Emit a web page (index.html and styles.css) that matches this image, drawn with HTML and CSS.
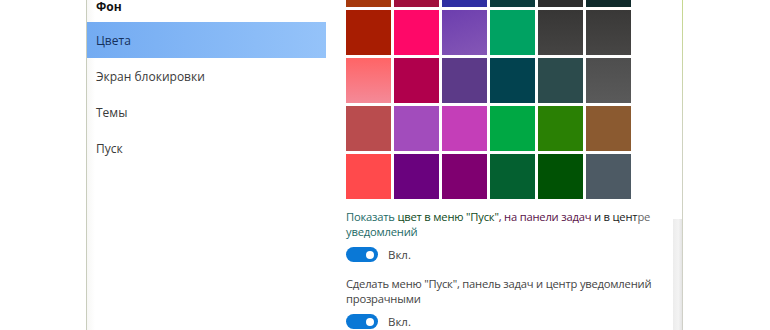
FILE: index.html
```html
<!DOCTYPE html>
<html lang="ru">
<head>
    <meta charset="UTF-8">
    <title>Персонализация - Цвета</title>
    <link rel="stylesheet" href="styles.css">
</head>
<body>
    <div class="window">
        <div class="gutter"></div>

        <nav class="side-nav">
            <div class="nav-item nav-head">Фон</div>
            <div class="nav-item active">Цвета</div>
            <div class="nav-item">Экран блокировки</div>
            <div class="nav-item">Темы</div>
            <div class="nav-item">Пуск</div>
        </nav>

        <main class="content">
            <div class="swatches">
                <div class="swatch"></div><div class="swatch"></div><div class="swatch"></div>
                <div class="swatch"></div><div class="swatch"></div><div class="swatch"></div>
                <div class="swatch"></div><div class="swatch"></div><div class="swatch"></div>
                <div class="swatch"></div><div class="swatch"></div><div class="swatch"></div>
                <div class="swatch"></div><div class="swatch"></div><div class="swatch"></div>
                <div class="swatch"></div><div class="swatch"></div><div class="swatch"></div>
                <div class="swatch"></div><div class="swatch"></div><div class="swatch"></div>
                <div class="swatch"></div><div class="swatch"></div><div class="swatch"></div>
                <div class="swatch"></div><div class="swatch"></div><div class="swatch"></div>
                <div class="swatch"></div><div class="swatch"></div><div class="swatch"></div>
            </div>

            <p class="option-text">
                <span class="t-teal">Показать</span>
                <span class="t-green">цвет в меню "Пуск"</span><span class="t-purple">, на панели задач</span>
                <span class="t-dark">и в цент</span><span class="t-grey">ре</span>
                <span class="t-teal">уведомлений</span>
            </p>
            <div class="toggle-row">
                <span class="toggle"><span class="knob"></span></span>
                <span class="toggle-label">Вкл.</span>
            </div>

            <p class="option-text second">Сделать меню "Пуск", панель задач и центр уведомлений прозрачными</p>
            <div class="toggle-row">
                <span class="toggle"><span class="knob"></span></span>
                <span class="toggle-label">Вкл.</span>
            </div>
        </main>

        <div class="scrollbar">
            <div class="thumb"></div>
        </div>
        <div class="edge"></div>
        <div class="blank"></div>
    </div>
</body>
</html>
```

FILE: styles.css
```css
* {
    margin: 0;
    padding: 0;
    box-sizing: border-box;
    font-family: 'Open Sans', 'Noto Sans', sans-serif;
}

body {
    background: white;
    color: #333;
    overflow: hidden;
}

.window {
    display: flex;
    height: 330px;
    overflow: hidden;
}

.gutter {
    width: 86px;
    flex-shrink: 0;
}

/* Left navigation */
.side-nav {
    width: 240px;
    flex-shrink: 0;
    border-left: 1px solid #c9cdbd;
    background: linear-gradient(90deg, #f7f7f5, #fff 8px);
}

.nav-item {
    height: 36px;
    display: flex;
    align-items: center;
    padding-left: 9px;
    font-size: 12px;
    color: #3a3a3a;
}

.nav-head {
    font-weight: 700;
    color: #111;
    height: 22px;
    align-items: flex-start;
    line-height: 13px;
}

.nav-item.active {
    background: linear-gradient(90deg, #73abf2, #95c3f9);
    color: #15305c;
}

/* Colour grid */
.content {
    width: 347px;
    flex-shrink: 0;
    padding-left: 20px;
    overflow: hidden;
}

.swatches {
    display: grid;
    grid-template-columns: repeat(6, 45px);
    grid-auto-rows: 45px;
    gap: 3px;
    margin-top: -38px;
}

.swatch:nth-child(1)  { background: #a6390c; }
.swatch:nth-child(2)  { background: #a0103c; }
.swatch:nth-child(3)  { background: #2f2fa2; }
.swatch:nth-child(4)  { background: #0b3b3c; }
.swatch:nth-child(5)  { background: #2e2e2e; }
.swatch:nth-child(6)  { background: #0f2a2b; }

.swatch:nth-child(7)  { background: #a81d02; }
.swatch:nth-child(8)  { background: #fe0868; }
.swatch:nth-child(9)  { background: linear-gradient(160deg, #6c3eae, #8557b6); }
.swatch:nth-child(10) { background: #00a262; }
.swatch:nth-child(11) { background: linear-gradient(180deg, #373635, #454443); }
.swatch:nth-child(12) { background: linear-gradient(180deg, #393837, #474645); }

.swatch:nth-child(13) { background: linear-gradient(180deg, #ff6466, #f48a98); }
.swatch:nth-child(14) { background: #b0004c; }
.swatch:nth-child(15) { background: #5c3a88; }
.swatch:nth-child(16) { background: #02424f; }
.swatch:nth-child(17) { background: #2c4b4c; }
.swatch:nth-child(18) { background: linear-gradient(180deg, #4e4e4e, #5a5a5a); }

.swatch:nth-child(19) { background: #b94c4e; }
.swatch:nth-child(20) { background: #a24cbc; }
.swatch:nth-child(21) { background: #c43eb8; }
.swatch:nth-child(22) { background: #00a844; }
.swatch:nth-child(23) { background: #2a8004; }
.swatch:nth-child(24) { background: #8b5a30; }

.swatch:nth-child(25) { background: #ff4a4c; }
.swatch:nth-child(26) { background: #6a027e; }
.swatch:nth-child(27) { background: #7f0070; }
.swatch:nth-child(28) { background: #046030; }
.swatch:nth-child(29) { background: #005204; }
.swatch:nth-child(30) { background: #4d5a64; }

/* Options */
.option-text {
    font-size: 11.2px;
    line-height: 15px;
    width: 316px;
    margin-top: 10px;
    color: #444;
    letter-spacing: -0.2px;
}

.option-text.second {
    margin-top: 14px;
}

.t-teal { color: #1d6a66; }
.t-green { color: #0f4a22; }
.t-purple { color: #581048; }
.t-dark { color: #1a1a1a; }
.t-grey { color: #666; }

.toggle-row {
    display: flex;
    align-items: center;
    gap: 10px;
    margin-top: 8px;
}

.toggle {
    width: 32px;
    height: 15px;
    border-radius: 8px;
    background: #0a78d6;
    display: flex;
    align-items: center;
    justify-content: flex-end;
    padding-right: 4px;
}

.knob {
    width: 8px;
    height: 8px;
    border-radius: 50%;
    background: white;
}

.toggle-label {
    font-size: 11.5px;
    color: #444;
}

/* Scrollbar and right edge */
.scrollbar {
    width: 9px;
    flex-shrink: 0;
    padding-top: 219px;
}

.thumb {
    height: 100%;
    background: linear-gradient(90deg, #ececec, #f3f3f3 60%, #e4e4e4);
}

.edge {
    width: 1px;
    flex-shrink: 0;
    background: linear-gradient(180deg, #c6d88e, #cfd3bf 40%, #d0d0c8);
}

.blank {
    flex: 1;
}
```
